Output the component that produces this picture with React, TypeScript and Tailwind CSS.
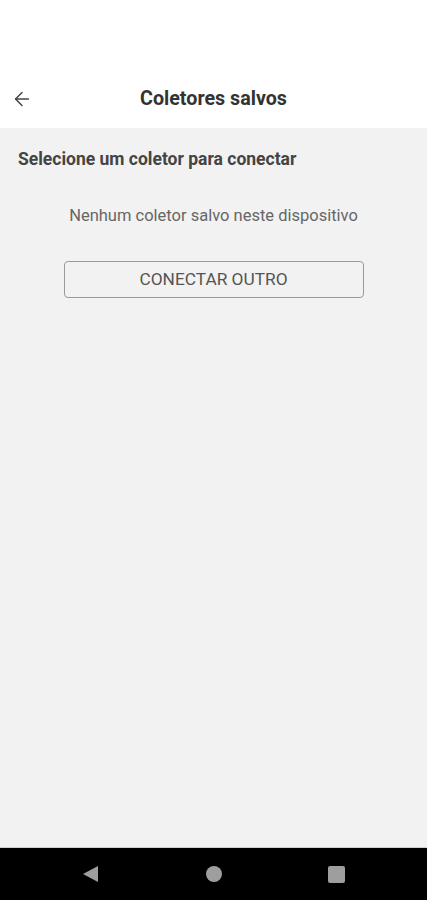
import { ArrowLeft } from "lucide-react";

export default function App() {
  return (
    <div className="flex h-[900px] w-[427px] flex-col bg-white font-['Roboto',sans-serif]">
      {/* status bar area */}
      <div className="h-[70px] bg-white"></div>

      {/* HEADER */}
      <div className="relative flex h-[58px] items-center justify-center bg-white">
        <ArrowLeft className="absolute left-[11px] top-[18px] h-[22px] w-[22px] text-[#444]" strokeWidth={1.6} />
        <span className="text-[19.7px] font-bold text-[#333]">Coletores salvos</span>
      </div>

      {/* CONTENT */}
      <div className="flex flex-1 flex-col bg-[#f2f2f2]">
        <div className="mt-[18px] pl-[18px] text-[17.5px] font-bold text-[#444]">
          Selecione um coletor para conectar
        </div>
        <div className="mt-[32px] text-center text-[16.5px] text-[#666]">
          Nenhum coletor salvo neste dispositivo
        </div>
        <div className="mt-[32px] flex justify-center">
          <button className="h-[37px] w-[300px] rounded-[4px] border border-[#9a9a9a] text-[17.3px] text-[#555]">
            CONECTAR OUTRO
          </button>
        </div>
      </div>

      {/* NAV BAR */}
      <div className="h-[1px] bg-[#cfcfcf]"></div>
      <div className="flex h-[52px] items-center justify-between bg-black px-[82px]">
        <svg width="17" height="18" viewBox="0 0 17 18">
          <path d="M16 1 L1 9 L16 17 Z" fill="#9e9e9e" />
        </svg>
        <div className="h-[16px] w-[16px] rounded-full bg-[#9e9e9e]"></div>
        <div className="h-[17px] w-[17px] rounded-[2px] bg-[#9e9e9e]"></div>
      </div>
    </div>
  );
}
